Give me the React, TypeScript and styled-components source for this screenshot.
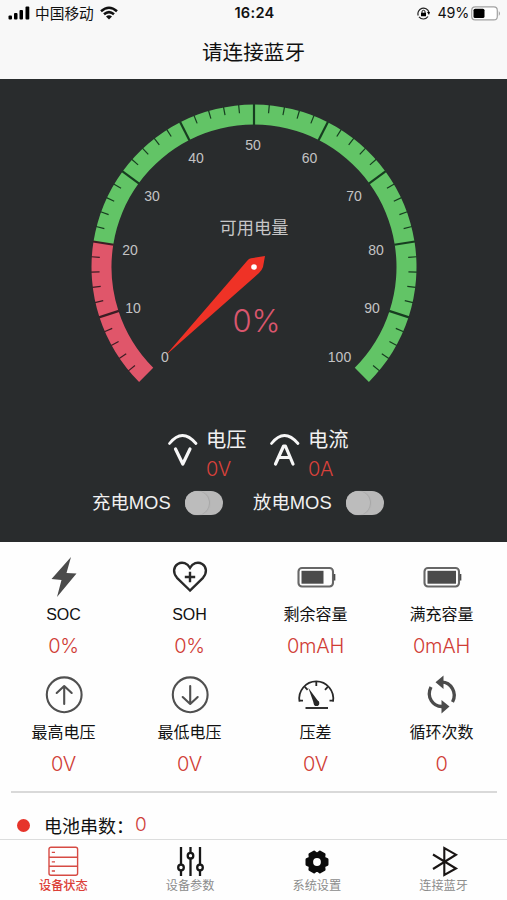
import React from 'react';
import styled, { createGlobalStyle } from 'styled-components';

const GlobalStyle = createGlobalStyle`
  * { box-sizing: border-box; }
  body { margin: 0; background: #fefefe; }
`;

const cjk = `'Noto Sans CJK SC', sans-serif`;
const latin = `Inter, 'Noto Sans CJK SC', sans-serif`;

const Screen = styled.div`
  width: 507px;
  height: 900px;
  overflow: hidden;
  display: flex;
  flex-direction: column;
  background: #fefefe;
  font-family: ${latin};
  color: #111;
`;

const Header = styled.header`
  flex: none;
  height: 79px;
  background: #f8f8f8;
`;

const StatusBar = styled.div`
  height: 26px;
  display: grid;
  grid-template-columns: 1fr auto 1fr;
  align-items: center;
  padding: 0 6px 0 8px;
`;

const StatusGroup = styled.div<{ $end?: boolean }>`
  display: flex;
  align-items: center;
  justify-content: ${p => (p.$end ? 'flex-end' : 'flex-start')};
`;

const Carrier = styled.span`
  margin: 0 6px 0 5px;
  font: 400 14.7px/26px ${cjk};
`;

const Clock = styled.span`
  font: 600 14.6px/26px ${latin};
  letter-spacing: 0.3px;
`;

const Percent = styled.span`
  margin: 0 2px 0 7px;
  font: 400 14.3px/26px ${latin};
  letter-spacing: -0.2px;
`;

const Title = styled.h1`
  margin: 0;
  text-align: center;
  font: 400 20.6px/50px ${cjk};
`;

const Dashboard = styled.section`
  flex: none;
  height: 463px;
  background: #292c2d;
  color: #f1f1f1;
`;

const GaugeChart = styled.svg`
  display: block;
  width: 507px;
  height: 341px;
`;

const GaugeLabel = styled.text`
  font: 400 14px 'Liberation Sans', sans-serif;
  fill: #c3c3c4;
  text-anchor: middle;
`;

const GaugeTitle = styled.text`
  font: 400 17.2px ${cjk};
  fill: #c6c6c7;
  text-anchor: middle;
`;

const GaugeValue = styled.text`
  font: 300 31px ${latin};
  fill: #d9566d;
  text-anchor: middle;
`;

const Meters = styled.div`
  display: flex;
  height: 66px;
  padding: 3px 0 0 166px;
`;

const Meter = styled.div`
  display: flex;
  width: 102px;
`;

const MeterIcon = styled.svg`
  flex: none;
  width: 32px;
  height: 36px;
  margin: 10px 8px 0 0;
`;

const MeterName = styled.div`
  font: 400 20.3px/30px ${cjk};
`;

const MeterValue = styled.div`
  margin-top: 1px;
  font: 300 20px/30px ${latin};
  letter-spacing: -0.3px;
  color: #d8413b;
`;

const Switches = styled.div`
  display: flex;
  height: 34px;
  align-items: center;
  padding-left: 92px;
`;

const SwitchField = styled.label`
  display: flex;
  align-items: center;
  width: 161px;
`;

const SwitchName = styled.span`
  width: 93px;
  font: 400 18.4px/30px 'Liberation Sans', ${cjk};
  white-space: nowrap;
`;

const Toggle = styled.span`
  width: 38px;
  height: 24px;
  border-radius: 12px;
  background: #b9b9b9;
`;

const Knob = styled.span`
  display: block;
  width: 24px;
  height: 24px;
  border-radius: 50%;
  background: #bcbcbc;
  box-shadow: 1px 0 1px #a6a6a6;
`;

const StatGrid = styled.section`
  flex: none;
  display: grid;
  grid-template-columns: repeat(4, 126px);
  grid-template-rows: 117.5px 117.5px;
  padding: 14px 0 0 0.5px;
  height: 249px;
`;

const Stat = styled.div`
  display: flex;
  flex-direction: column;
  align-items: center;
`;

const StatIcon = styled.svg`
  width: 42px;
  height: 42px;
`;

const StatName = styled.div`
  margin-top: 3px;
  font: 400 16px/27px 'Liberation Sans', ${cjk};
  white-space: nowrap;
`;

const StatValue = styled.div`
  margin-top: 5px;
  font: 300 20px/27px ${latin};
  letter-spacing: -0.3px;
  color: #d03c35;
`;

const Divider = styled.hr`
  flex: none;
  width: 486px;
  height: 2px;
  margin: 0 0 0 11px;
  border: 0;
  background: #d9d9d9;
`;

const Series = styled.div`
  flex: none;
  height: 46px;
  display: flex;
  align-items: center;
  padding: 18px 0 0 17px;
`;

const Dot = styled.i`
  width: 13px;
  height: 13px;
  margin-right: 14px;
  border-radius: 50%;
  background: #e6342b;
`;

const SeriesName = styled.span`
  width: 91px;
  font: 400 18px/26px ${cjk};
  white-space: nowrap;
`;

const SeriesValue = styled.span`
  font: 300 19px/26px ${latin};
  color: #ce403a;
`;

const TabBar = styled.nav`
  flex: none;
  height: 61px;
  display: grid;
  grid-template-columns: repeat(4, 1fr);
  border-top: 1px solid #dcdddd;
  background: #fefefe;
`;

const Tab = styled.div<{ $active?: boolean }>`
  display: flex;
  flex-direction: column;
  align-items: center;
  padding-top: 6px;
  font: ${p => (p.$active ? 500 : 400)} 12.2px/16px ${cjk};
  color: ${p => (p.$active ? '#dc4038' : '#8c8c8c')};
`;

const TabIcon = styled.svg`
  width: 32px;
  height: 32px;
  margin-bottom: -1px;
`;

const CX = 254;
const CY = 188;
const OUTER = 162.5;
const INNER = 142.5;

const pointAt = (value: number, radius: number) => {
  const a = ((135 + value * 2.7) * Math.PI) / 180;
  return [CX + radius * Math.cos(a), CY + radius * Math.sin(a)];
};

const band = (from: number, to: number) => {
  const large = (to - from) * 2.7 > 180 ? 1 : 0;
  const [a, b, c, d] = [
    pointAt(from, OUTER), pointAt(to, OUTER), pointAt(to, INNER), pointAt(from, INNER),
  ];
  return `M${a} A${OUTER} ${OUTER} 0 ${large} 1 ${b} L${c} A${INNER} ${INNER} 0 ${large} 0 ${d}Z`;
};

const labels = [
  [165, 283], [133, 234], [130, 176], [152, 122], [196, 84], [253, 71],
  [309.5, 84], [354, 122], [376, 176], [372, 234], [339.5, 283],
];

const Gauge = () => (
  <GaugeChart viewBox="0 0 507 341">
    <path d={band(0, 20)} fill="#e0566a" />
    <path d={band(20, 100)} fill="#62c466" />
    {Array.from({ length: 49 }, (_, i) => (i + 1) * 2).map(v => {
      const major = v % 10 === 0;
      const [x1, y1] = pointAt(v, OUTER + 0.5);
      const [x2, y2] = pointAt(v, major ? INNER - 0.5 : OUTER - 8);
      return (
        <line key={v} x1={x1} y1={y1} x2={x2} y2={y2}
          stroke={v <= 20 ? '#3c1d24' : '#173d20'} strokeWidth={major ? 2.2 : 1.2} />
      );
    })}
    <path d="M165.5 276.5 L247 182 Q249 179 253 179 L265 177 L263 188 Q262 191 259 194Z" fill="#ef3226" />
    {labels.map(([x, y], i) => <GaugeLabel key={i} x={x} y={y}>{i * 10}</GaugeLabel>)}
    <GaugeTitle x={254} y={154.5}>可用电量</GaugeTitle>
    <circle cx={254} cy={188} r={2.8} fill="#fff" />
    <GaugeValue x={256.5} y={253}>0%</GaugeValue>
  </GaugeChart>
);

const arcLine = 'M3.5 10.5 Q16.3 -5.5 30 10.5';

const meters = [
  { name: '电压', value: '0V', path: 'M9.5 16 L16.8 31 L24 16' },
  { name: '电流', value: '0A', path: 'M7.5 31 L15.6 13 H17.4 L25 31 M10.5 24.5 H22' },
];

const ink = '#4b4b4b';

const BoltIcon = () => <path d="M28 1 L8.5 23 L18.5 24 L14 41 L33.5 17.5 L23.5 17 Z" fill={ink} />;

const HeartIcon = () => (
  <g fill="none" stroke="#292929" strokeWidth="2.4">
    <path d="M21 34.5 L8 21.8 C3.8 17 4.2 10.8 8.8 8 C13.5 5.2 18.5 7.5 21 11.8 C23.5 7.5 28.5 5.2 33.2 8 C37.8 10.8 38.2 17 34 21.8 Z" />
    <path d="M21 15.8 V26.2 M15.8 21 H26.2" />
  </g>
);

const BatteryIcon = ({ level }: { level: number }) => (
  <g>
    <rect x="3.5" y="12" width="34.5" height="18.5" rx="3.5" fill="none" stroke="#676767" strokeWidth="2.1" />
    <rect x="6.5" y="14.8" width={level} height="12.9" fill={ink} />
    <path d="M38.8 18.7 H39.6 V23.8 H38.8" stroke={ink} strokeWidth="1.5" fill={ink} />
  </g>
);

const ArrowIcon = ({ down }: { down?: boolean }) => (
  <g fill="none" stroke="#505050" strokeWidth="2.1" strokeLinecap="round" strokeLinejoin="round">
    <circle cx="21.2" cy="20.8" r="17.4" />
    <path d={down ? 'M21.2 12 V29.5 M13.7 23 L21.2 30 L28.7 23' : 'M21.2 30 V12.5 M13.7 19 L21.2 12 L28.7 19'} />
  </g>
);

const DialIcon = () => (
  <g fill="none" stroke="#282828" strokeWidth="1.8">
    <path d="M4.5 27.5 A17 17.2 0 1 1 38 27.5" />
    <path d="M4 26.7 H8 M34.5 26.7 H38.5 M21.3 7.5 V12 M9.8 12.8 L12.6 15.8 M32.8 12.8 L30 15.8" />
    <path d="M13.3 13.8 L23.8 28 A2.7 2.7 0 0 1 19.3 30.7 Z" fill="#282828" stroke="none" />
    <circle cx="21.5" cy="29.2" r="1.9" fill="#282828" />
    <path d="M10.5 34 H33" strokeWidth="1.9" />
  </g>
);

const CycleIcon = () => (
  <g fill="none" stroke={ink} strokeWidth="3.3">
    <path d="M20.5 8.2 C30 8 36.5 19 31.5 28" />
    <path d="M21.5 32.5 C12 33 5 23 10 13" />
    <path d="M14.5 8.2 L22.5 1.5 V15 Z M28.5 32.5 L20.5 26 V39.5 Z" fill={ink} stroke="none" />
  </g>
);

const stats = [
  { name: 'SOC', value: '0%', icon: <BoltIcon /> },
  { name: 'SOH', value: '0%', icon: <HeartIcon /> },
  { name: '剩余容量', value: '0mAH', icon: <BatteryIcon level={22} /> },
  { name: '满充容量', value: '0mAH', icon: <BatteryIcon level={28.5} /> },
  { name: '最高电压', value: '0V', icon: <ArrowIcon /> },
  { name: '最低电压', value: '0V', icon: <ArrowIcon down /> },
  { name: '压差', value: '0V', icon: <DialIcon /> },
  { name: '循环次数', value: '0', icon: <CycleIcon /> },
];

const gearPath = Array.from({ length: 6 }, (_, i) => {
  const at = (deg: number, r: number) => {
    const a = (deg * Math.PI) / 180;
    return `${(16 + r * Math.cos(a)).toFixed(2)} ${(16 + r * Math.sin(a)).toFixed(2)}`;
  };
  const d = i * 60;
  return `${i ? 'L' : 'M'}${at(d - 14, 10.6)} L${at(d + 14, 10.6)} L${at(d + 30, 8.1)}`;
}).join(' ') + 'Z';

const tabs = [
  {
    name: '设备状态', active: true,
    icon: (
      <g fill="none" stroke="#d64a43" strokeWidth="1.4">
        <rect x="2" y="1.2" width="28.6" height="28" rx="2" />
        <path d="M2 11.2 H30 M2 20.3 H30 M4.8 6.4 H8 M4.8 15.9 H8 M4.8 25 H8" />
      </g>
    ),
  },
  {
    name: '设备参数',
    icon: (
      <g fill="#fefefe" stroke="#171717" strokeWidth="2.3">
        <path d="M7 1 V30 M16.5 1 V30 M26 1 V30" />
        <circle cx="7" cy="21.5" r="2.8" /><circle cx="16.5" cy="9.7" r="2.8" /><circle cx="26" cy="21.5" r="2.8" />
      </g>
    ),
  },
  {
    name: '系统设置',
    icon: (
      <g>
        <path d={gearPath} fill="#0b0b0b" stroke="#0b0b0b" strokeWidth="2.4" strokeLinejoin="round" />
        <circle cx="16" cy="16" r="3.9" fill="#fefefe" />
      </g>
    ),
  },
  {
    name: '连接蓝牙',
    icon: <path d="M5 8.5 L28 22.5 L16.3 29 V2 L28 8.7 L5 23" fill="none" stroke="#191514" strokeWidth="2.1" />,
  },
];

export default function App() {
  return (
    <Screen>
      <GlobalStyle />
      <Header>
        <StatusBar>
          <StatusGroup>
            <svg width="22" height="14" viewBox="0 0 22 14">
              <rect x="0.5" y="9.5" width="3.5" height="4" rx="1" />
              <rect x="6" y="7" width="3.5" height="6.5" rx="1" />
              <rect x="11.5" y="4" width="3.5" height="9.5" rx="1" />
              <rect x="17.5" y="0.5" width="3.8" height="13" rx="1" />
            </svg>
            <Carrier>中国移动</Carrier>
            <svg width="18" height="14" viewBox="0 0 18 14">
              <g fill="none" stroke="#111" strokeWidth="2.5">
                <path d="M1 5.2 Q9 -1.8 17 5.2" />
                <path d="M4 8.3 Q9 3.9 14 8.3" />
              </g>
              <path d="M6 10.5 Q9 8 12 10.5 L9 13.5Z" fill="#111" />
            </svg>
          </StatusGroup>
          <Clock>16:24</Clock>
          <StatusGroup $end>
            <svg width="13" height="13" viewBox="0 0 13 13">
              <path d="M1.2 8.5 A5.5 5.5 0 1 1 11.9 5 M11 9.5 A5.5 5.5 0 0 1 2 9.8" fill="none" stroke="#222" strokeWidth="1.2" />
              <path d="M10 5 H13 L12 8Z" />
              <rect x="4" y="5.7" width="5" height="3.6" rx="0.4" />
              <path d="M5 6 V4.8 A1.5 1.5 0 0 1 8 4.8 V6" fill="none" stroke="#111" />
            </svg>
            <Percent>49%</Percent>
            <svg width="30" height="15" viewBox="0 0 30 15">
              <rect x="0.7" y="0.9" width="25.6" height="13" rx="3.5" fill="#fff" stroke="#a1a1a1" strokeWidth="1.2" />
              <rect x="2.5" y="2.7" width="11" height="9.4" rx="1.6" />
              <path d="M27.8 5 Q30 7.4 27.8 10Z" fill="#999" />
            </svg>
          </StatusGroup>
        </StatusBar>
        <Title>请连接蓝牙</Title>
      </Header>

      <Dashboard>
        <Gauge />
        <Meters>
          {meters.map(m => (
            <Meter key={m.name}>
              <MeterIcon viewBox="0 0 32 36" fill="none" stroke="#f7f7f7" strokeLinecap="round">
                <path d={arcLine} strokeWidth="2.8" />
                <path d={m.path} strokeWidth="3.2" strokeLinejoin="round" />
              </MeterIcon>
              <div>
                <MeterName>{m.name}</MeterName>
                <MeterValue>{m.value}</MeterValue>
              </div>
            </Meter>
          ))}
        </Meters>
        <Switches>
          {['充电MOS', '放电MOS'].map(name => (
            <SwitchField key={name}>
              <SwitchName>{name}</SwitchName>
              <Toggle><Knob /></Toggle>
            </SwitchField>
          ))}
        </Switches>
      </Dashboard>

      <StatGrid>
        {stats.map(s => (
          <Stat key={s.name}>
            <StatIcon viewBox="0 0 42 42">{s.icon}</StatIcon>
            <StatName>{s.name}</StatName>
            <StatValue>{s.value}</StatValue>
          </Stat>
        ))}
      </StatGrid>
      <Divider />
      <Series>
        <Dot />
        <SeriesName>电池串数：</SeriesName>
        <SeriesValue>0</SeriesValue>
      </Series>

      <TabBar>
        {tabs.map(t => (
          <Tab key={t.name} $active={t.active}>
            <TabIcon viewBox="0 0 32 32">{t.icon}</TabIcon>
            {t.name}
          </Tab>
        ))}
      </TabBar>
    </Screen>
  );
}
